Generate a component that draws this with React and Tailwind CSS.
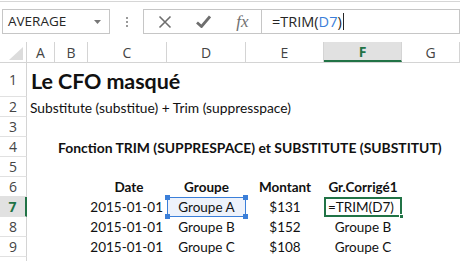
// Excel — feuille "Le CFO masqué", formule TRIM en cours d'édition

const cellFont = { fontFamily: 'Lato, "Noto Sans", sans-serif' };

const COLS = [
  { id: 'A', w: 'w-[28px]' },
  { id: 'B', w: 'w-[33px]' },
  { id: 'C', w: 'w-[79px]' },
  { id: 'D', w: 'w-[79px]' },
  { id: 'E', w: 'w-[78px]' },
  { id: 'F', w: 'w-[78px]' },
  { id: 'G', w: 'flex-1' },
];

const DATA = [
  { date: '2015-01-01', groupe: 'Groupe A', montant: '$131', corrige: null },
  { date: '2015-01-01', groupe: 'Groupe B', montant: '$152', corrige: 'Groupe B' },
  { date: '2015-01-01', groupe: 'Groupe C', montant: '$108', corrige: 'Groupe C' },
];

// ── Barre de formule ──────────────────────────

function BarreFormule() {
  return (
    <div className="h-[42px] flex flex-col">
      <div className="h-[2px] border-b border-[#d6d6d6]" />
      <div className="flex items-start pt-[7px]">
        <div className="ml-[2px] w-[108px] h-[25px] border border-[#c6c6c6] flex items-center justify-between pl-[5px] pr-[8px]">
          <span className="text-[13.5px] text-[#262626]" style={{ fontFamily: '"Open Sans", sans-serif' }}>AVERAGE</span>
          <svg width="7" height="4" viewBox="0 0 7 4"><path d="M0 0h7L3.5 4z" fill="#777" /></svg>
        </div>
        <div className="w-[33px] h-[25px] flex flex-col items-center justify-center gap-[2px]">
          <span className="w-[2px] h-[2px] bg-[#9a9a9a]" />
          <span className="w-[2px] h-[2px] bg-[#9a9a9a]" />
          <span className="w-[2px] h-[2px] bg-[#9a9a9a]" />
        </div>
        <div className="w-[119px] h-[25px] border border-[#c6c6c6] flex items-center">
          <div className="w-[38px] flex justify-center pl-[4px]">
            <svg width="14" height="14" viewBox="0 0 14 14"><path d="M1.5 1.5l11 11M12.5 1.5l-11 11" stroke="#6e6e6e" strokeWidth="1.6" /></svg>
          </div>
          <div className="w-[42px] flex justify-center">
            <svg width="15" height="13" viewBox="0 0 15 13"><path d="M1 7.5l4.5 4L14 1.5" stroke="#6e6e6e" strokeWidth="2.8" fill="none" /></svg>
          </div>
          <div className="flex-1 flex justify-center">
            <span className="italic text-[17px] text-[#707070] leading-none" style={{ fontFamily: '"Liberation Serif", serif' }}>fx</span>
          </div>
        </div>
        <div className="flex-1 h-[25px] border border-l-0 border-[#c6c6c6] flex items-center pl-[10px]">
          <span className="text-[14.5px] text-[#262626]" style={{ fontFamily: '"Open Sans", sans-serif' }}>
            =TRIM(<span className="text-[#3b7fd9]">D7</span>)
          </span>
          <span className="w-[1px] h-[17px] bg-[#262626] ml-[1px]" />
        </div>
      </div>
    </div>
  );
}

// ── En-têtes ──────────────────────────────────

function EnTetesColonnes() {
  return (
    <div className="flex h-[21px] border-b border-[#d4d4d4]">
      <div className="w-[27px] border-r border-[#d4d4d4] flex items-end justify-end pr-[3px] pb-[2px]">
        <svg width="14" height="13" viewBox="0 0 14 13"><path d="M14 0v13H0z" fill="#dcdcdc" /></svg>
      </div>
      {COLS.map((c) => {
        const actif = c.id === 'F';
        return (
          <div
            key={c.id}
            className={`${c.w} border-r border-[#d4d4d4] flex items-center justify-center text-[14px] ${
              actif ? 'bg-[#e1e1e1] text-[#217346] font-bold border-b-2 border-b-[#217346]' : 'text-[#444]'
            }`}
            style={{ fontFamily: '"Open Sans", sans-serif' }}
          >
            {c.id}
          </div>
        );
      })}
    </div>
  );
}

function NumLigne({ n, h = 'h-[20px]', actif = false }) {
  return (
    <div
      className={`w-[27px] ${h} shrink-0 flex items-center justify-center text-[14px] border-b border-[#e1e1e1] ${
        actif ? 'bg-[#e1e1e1] text-[#217346] font-bold border-r-2 border-r-[#217346]' : 'text-[#444] border-r border-r-[#d4d4d4]'
      }`}
      style={{ fontFamily: '"Open Sans", sans-serif' }}
    >
      {n}
    </div>
  );
}

// ── Lignes ────────────────────────────────────

function LigneTexte({ n, h, children }) {
  return (
    <div className="flex">
      <NumLigne n={n} h={h} />
      <div className="flex-1 flex items-end min-w-0 whitespace-nowrap text-[#111]" style={cellFont}>
        {children}
      </div>
    </div>
  );
}

function LigneDonnees({ n, actif, cells }) {
  return (
    <div className="flex text-[13.5px] text-[#111]" style={cellFont}>
      <NumLigne n={n} actif={actif} />
      <div className="w-[28px]" />
      <div className="w-[33px]" />
      {cells}
    </div>
  );
}

export default function App() {
  return (
    <div className="w-[460px] h-[261px] bg-white overflow-hidden">
      <BarreFormule />
      <EnTetesColonnes />

      <LigneTexte n="1" h="h-[34px]">
        <span className="pl-[4px] pb-[5px] text-[21.5px] font-bold leading-none tracking-[-0.1px]">Le CFO masqué</span>
      </LigneTexte>
      <LigneTexte n="2">
        <span className="pl-[3px] pb-[2px] text-[13.8px] leading-none">Substitute (substitue) + Trim (suppresspace)</span>
      </LigneTexte>
      <LigneTexte n="3" />
      <LigneTexte n="4">
        <span className="pl-[31px] pb-[2px] text-[13.9px] font-bold leading-none">
          Fonction TRIM (SUPPRESPACE) et SUBSTITUTE (SUBSTITUT)
        </span>
      </LigneTexte>
      <LigneTexte n="5" />

      <LigneDonnees
        n="6"
        cells={
          <>
            <div className="w-[79px] h-[20px] flex items-center justify-center font-bold pl-[3px]">Date</div>
            <div className="w-[79px] h-[20px] flex items-center justify-center font-bold">Groupe</div>
            <div className="w-[78px] h-[20px] flex items-center justify-center font-bold">Montant</div>
            <div className="w-[78px] h-[20px] flex items-center justify-center font-bold">Gr.Corrigé1</div>
          </>
        }
      />

      {DATA.map((d, i) => {
        const n = i + 7;
        const premiere = i === 0;
        return (
          <LigneDonnees
            key={n}
            n={String(n)}
            actif={premiere}
            cells={
              <>
                <div className="w-[79px] h-[20px] flex items-center justify-end pr-[4px]">{d.date}</div>
                <div
                  className={`relative w-[79px] h-[20px] flex items-center justify-center ${
                    premiere ? 'border border-[#3b7fd9] bg-[#edf2fb]' : ''
                  }`}
                >
                  {d.groupe}
                  {premiere && (
                    <>
                      <span className="absolute -left-[3px] -top-[3px] w-[5px] h-[5px] bg-[#3b7fd9]" />
                      <span className="absolute -right-[3px] -top-[3px] w-[5px] h-[5px] bg-[#3b7fd9]" />
                      <span className="absolute -left-[3px] -bottom-[3px] w-[5px] h-[5px] bg-[#3b7fd9]" />
                      <span className="absolute -right-[3px] -bottom-[3px] w-[5px] h-[5px] bg-[#3b7fd9]" />
                    </>
                  )}
                </div>
                <div className="w-[78px] h-[20px] flex items-center justify-center">{d.montant}</div>
                {premiere ? (
                  <div className="relative w-[78px] h-[20px] border-2 border-[#217346] flex items-center pl-[2px]">
                    =TRIM(D7)
                    <span className="absolute -right-[4px] -bottom-[4px] w-[5px] h-[5px] bg-[#217346] border border-white" />
                  </div>
                ) : (
                  <div className="w-[78px] h-[20px] flex items-center justify-center">{d.corrige}</div>
                )}
              </>
            }
          />
        );
      })}
      <LigneTexte n="" />
    </div>
  );
}
